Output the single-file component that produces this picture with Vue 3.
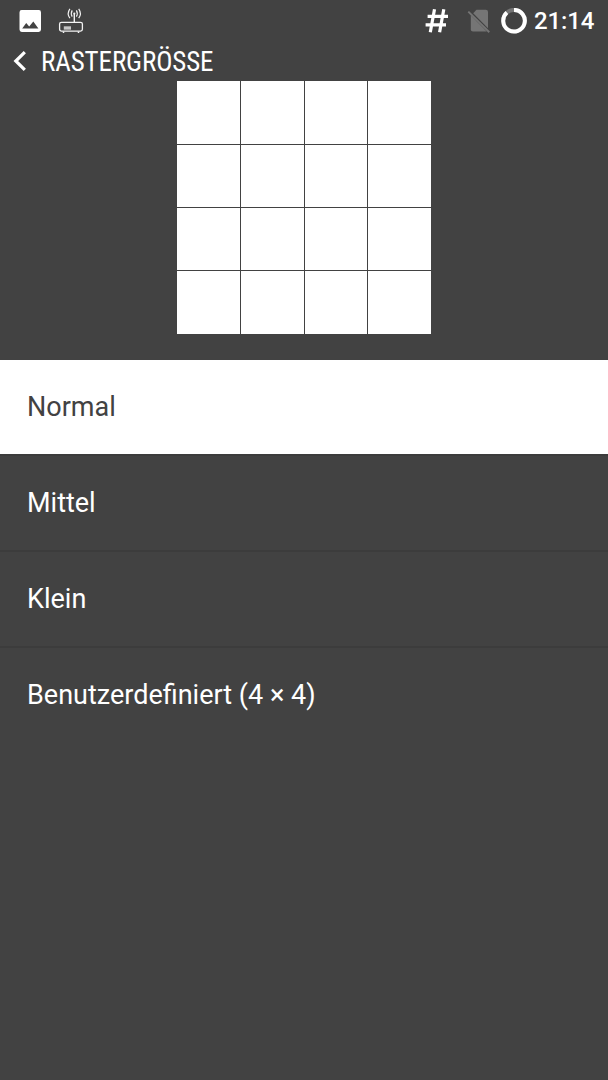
<template>
  <div class="screen">
    <div class="status-bar">
      <svg class="icon-image" width="22" height="22" viewBox="0 0 22 22">
        <path
          fill-rule="evenodd"
          fill="#ffffff"
          d="M2.6 0H19.9Q22 0 22 2.4V19.6Q22 22 19.6 22H2.8Q.5 22 .5 19.6V2.4Q.5 0 2.6 0ZM3.2 18.4H19.4L14.3 11.4L10.2 16.4L7.2 13Z"
        />
      </svg>
      <svg class="icon-router" width="26" height="26" viewBox="0 0 26 26" fill="none" stroke="#f2f2f2">
        <rect x="1.6" y="14.3" width="22.8" height="8.8" rx="1.8" stroke-width="1.3" />
        <path d="M5.5 23.5V25M20.5 23.5V25" stroke-width="1.5" />
        <path d="M5.8 19.2H13M5.8 20.8H13" stroke-width="1.3" />
        <path d="M16.3 6V14" stroke-width="1.4" />
        <circle cx="16.3" cy="5.6" r="1.1" fill="#f2f2f2" stroke="none" />
        <path
          d="M14.2 2.4Q12.4 5.6 14.2 8.6M18.4 2.4Q20.2 5.6 18.4 8.6M11.9 .8Q8.5 5.6 11.9 10.2M20.7 .8Q24.1 5.6 20.7 10.2"
          stroke-width="1.2"
        />
      </svg>
      <svg class="icon-hash" width="23" height="24" viewBox="0 0 23 24" fill="none" stroke="#ffffff" stroke-width="3.2">
        <path d="M9.5 .3L5.3 23.3M18.8 .3L14.6 23.3M2.6 7.3H23M.6 15.8H21" />
      </svg>
      <svg class="icon-sim" width="24" height="24" viewBox="0 0 24 24">
        <path fill="#757575" d="M9.5 .8H18.8Q21 .8 21 3V19.2L6.2 4.3Z" />
        <path fill="#757575" d="M3.8 6.2L19.8 22.5H6Q3.8 22.5 3.8 20.3Z" />
        <path d="M1.3 2.6L22.3 23.3" stroke="#757575" stroke-width="1.9" />
      </svg>
      <svg class="icon-battery" width="26" height="26" viewBox="0 0 26 26" fill="none" stroke-width="4">
        <circle cx="13" cy="12.7" r="10.8" stroke="#757575" />
        <path stroke="#ffffff" d="M13 1.9A10.8 10.8 0 1 1 5.9 4.6" />
      </svg>
      <span class="clock">21:14</span>
    </div>

    <div class="title-bar">
      <svg class="icon-back" width="13" height="20" viewBox="0 0 13 20">
        <path d="M11.8 1.2L2.8 10L11.8 18.8" fill="none" stroke="#ffffff" stroke-width="3.2" />
      </svg>
      <span class="title">RASTERGRÖSSE</span>
    </div>

    <div class="preview">
      <div class="preview-cell" v-for="n in 16" :key="n"></div>
    </div>

    <div class="list">
      <div
        v-for="item in options"
        :key="item.id"
        :class="{ 'list-item': true, active: item.id == current }"
        @click="current = item.id"
      >
        {{ item.name }}
      </div>
    </div>
  </div>
</template>

<script setup>
import { ref } from "vue";

const current = ref("normal");

const options = [
  { id: "normal", name: "Normal" },
  { id: "medium", name: "Mittel" },
  { id: "small", name: "Klein" },
  { id: "custom", name: "Benutzerdefiniert (4 × 4)" },
];
</script>

<style>
body {
  background: #424242;
}
</style>

<style scoped>
.screen {
  width: 608px;
  height: 1080px;
  background: #424242;
  color: #ffffff;
  font-family: Roboto, sans-serif;
  overflow: hidden;
}
.status-bar {
  display: flex;
  align-items: center;
  height: 41px;
  padding-left: 19px;
}
.icon-router {
  margin-left: 17px;
}
.icon-hash {
  margin-left: 341px;
}
.icon-sim {
  margin-left: 19px;
}
.icon-battery {
  margin-left: 10px;
}
.clock {
  margin-left: 7px;
  padding-top: 2px;
  font-size: 24px;
  font-weight: 500;
  letter-spacing: -0.1px;
  line-height: 41px;
}
.title-bar {
  display: flex;
  align-items: center;
  height: 40px;
  padding-left: 13px;
}
.title {
  margin-left: 15px;
  padding-top: 2px;
  font-family: "Roboto Condensed", Roboto, sans-serif;
  font-stretch: 75%;
  font-size: 27px;
  letter-spacing: -0.1px;
  line-height: 40px;
  white-space: nowrap;
}
.preview {
  display: grid;
  grid-template-columns: 63px 63px 62px 63px;
  grid-template-rows: 63px 62px 62px 63px;
  gap: 1px;
  width: 254px;
  margin: 0 auto 25.5px;
  background: #424242;
}
.preview-cell {
  background: #ffffff;
}
.list-item {
  height: 96px;
  padding-left: 27px;
  box-sizing: border-box;
  border-bottom: 2px solid #3c3c3c;
  font-size: 27px;
  line-height: 94px;
}
.list-item:last-child {
  border-bottom: none;
}
.active {
  background: #ffffff;
  background-clip: padding-box;
  color: #424242;
}
</style>
